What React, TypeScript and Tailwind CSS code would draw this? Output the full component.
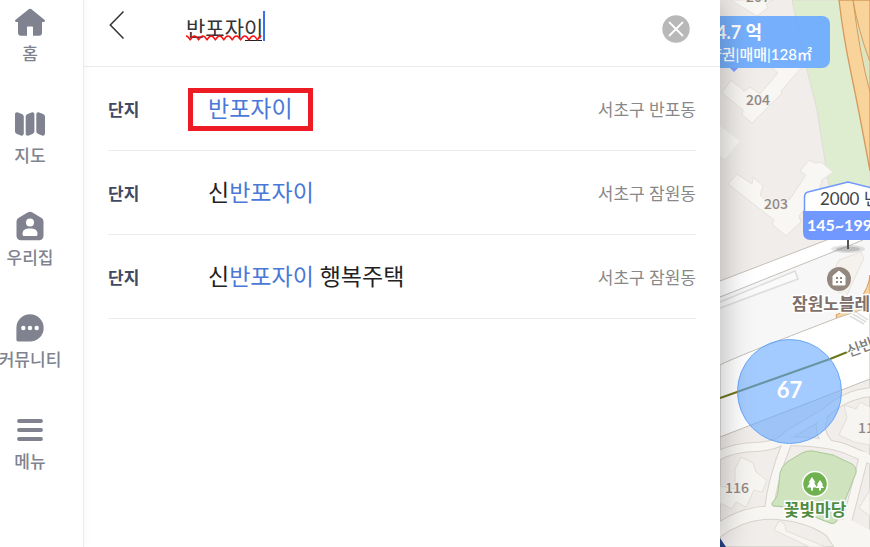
import React, { useState } from 'react';

const navItems = [
  { id: 'home', label: '홈' },
  { id: 'map', label: '지도' },
  { id: 'myhome', label: '우리집' },
  { id: 'community', label: '커뮤니티' },
  { id: 'menu', label: '메뉴' },
];

const results = [
  { before: '', match: '반포자이', after: '', area: '서초구 반포동', selected: true },
  { before: '신', match: '반포자이', after: '', area: '서초구 잠원동', selected: false },
  { before: '신', match: '반포자이', after: ' 행복주택', area: '서초구 잠원동', selected: false },
];

function NavIcon({ id }: { id: string }) {
  switch (id) {
    case 'home':
      return (
        <svg className="w-8 h-8" viewBox="0 0 32 32" fill="currentColor" aria-hidden="true">
          <path d="M15 3.1a1.8 1.8 0 0 1 2.2 0l13.2 10.6c1.1.9.6 2.2-.7 2.2H28v11c0 1.6-1.2 2.8-2.8 2.8H19v-8.4c0-.6-.3-.9-.9-.9h-4.2c-.6 0-.9.3-.9.9v8.4H6.8c-1.6 0-2.8-1.2-2.8-2.8v-11H2.3c-1.3 0-1.8-1.3-.7-2.200z" />
        </svg>);

    case 'map':
      return (
        <svg className="w-8 h-8" viewBox="0 0 32 32" fill="currentColor" aria-hidden="true">
          <path d="M1 6.7C1 4.700 2.500 3.900 4 4.500l3.800 1.600C9.300 6.800 9.800 7.500 9.800 9v16.300c0 2-1.400 2.800-2.900 2.200l-4-1.600C1.500 25.200 1 24.500 1 23z" />
          <path d="M20.400 6.700c0-2-1.400-2.800-2.900-2.200l-3.800 1.600c-1.500.7-2 1.400-2 2.900v16.300c0 2 1.400 2.800 2.900 2.200l3.900-1.600c1.400-.7 1.900-1.400 1.900-2.900z" />
          <path d="M22.300 6.700c0-2 1.400-2.800 2.900-2.200L29 6.100c1.500.7 2 1.400 2 2.900v16.300c0 2-1.400 2.800-2.900 2.200l-3.900-1.600c-1.400-.7-1.900-1.400-1.900-2.900z" />
        </svg>);

    case 'myhome':
      return (
        <svg className="w-8 h-8" viewBox="0 0 32 32" fill="currentColor" aria-hidden="true">
          <path d="M14 2.3a4 4 0 0 1 4 0l9.200 5.500A4 4 0 0 1 29.500 11.500V26a4.200 4.200 0 0 1-4.200 4.200H6.700A4.200 4.200 0 0 1 2.500 26V11.500A4 4 0 0 1 4.800 7.800z" />
          <circle cx="16" cy="12.500" r="4" fill="#fff" />
          <path d="M8.500 24c0-4 2.500-5.500 7.500-5.500s7.500 1.500 7.500 5.500c0 1.400-.5 2-1.800 2H10.300c-1.300 0-1.800-.6-1.800-2z" fill="#fff" />
        </svg>);

    case 'community':
      return (
        <svg className="w-8 h-8" viewBox="0 0 32 32" fill="currentColor" aria-hidden="true">
          <path d="M16 2.300a13.600 13.600 0 1 1 0 27.300H4.600c-1.400 0-2.200-.8-2.200-2.200V16A13.600 13.600 0 0 1 16 2.300z" />
          <circle cx="9.300" cy="16" r="2.200" fill="#fff" />
          <circle cx="16" cy="16" r="2.200" fill="#fff" />
          <circle cx="22.700" cy="16" r="2.200" fill="#fff" />
        </svg>);

    default:
      return (
        <svg className="w-8 h-8" viewBox="0 0 32 32" stroke="currentColor" strokeWidth="3.800" strokeLinecap="round" aria-hidden="true">
          <path d="M5 7h22M5 16h22M5 25h22" />
        </svg>);

  }
}

function Sidebar() {
  return (
    <nav className="relative z-20 w-21 shrink-0 bg-white border-r border-[#ececec] pt-1.5 pr-[23px] flex flex-col gap-[42px] shadow-[2px_0_6px_rgba(0,0,0,0.03)]">
      {navItems.map((item) =>
      <a
        key={item.id}
        href={`#${item.id}`}
        className="flex flex-col items-center gap-1 text-[#80838f]">

          <NavIcon id={item.id} />
          <span className="flex w-full justify-center text-[17px] leading-6 font-medium whitespace-nowrap">
            {item.label}
          </span>
        </a>
      )}
    </nav>);

}

function SearchHeader() {
  const [query, setQuery] = useState('반포자이');
  return (
    <header className="h-[67px] pb-2 pl-6 pr-[30px] flex items-center border-b border-[#ebebeb]">
      <button type="button" aria-label="뒤로" className="w-[78px] shrink-0 pb-2">
        <svg className="w-5 h-8" viewBox="0 0 20 32" fill="none" stroke="#333" strokeWidth="1.500" aria-hidden="true">
          <path d="M15.500 2.500 2.300 16 15.500 29.500" />
        </svg>
      </button>
      <div className="relative flex-1 min-w-0 pb-1">
        <input
          type="text"
          aria-label="검색"
          value={query}
          spellCheck={false}
          onChange={(e) => setQuery(e.target.value)}
          className="block w-full h-8 text-[21px] text-[#333] bg-transparent outline-none" />

        {query === '반포자이' &&
        <svg className="absolute left-0 top-0 w-20 h-8 pointer-events-none" viewBox="0 0 80 32" fill="none" aria-hidden="true">
            <path d="M59 29.500h17" stroke="#222" />
            <path
            d="M0 25q2.100 0 4.200 4 4.200-8 8.400 0 4.200-8 8.400 0 4.200-8 8.400 0 4.200-8 8.400 0 4.200-8 8.400 0 4.200-8 8.400 0 4.200-8 8.400 0 4.200-8 8.400 0 2-4 4-4"
            stroke="#fa1010"
            strokeWidth="1.400"
            strokeLinejoin="round" />

            <path d="M78 0v30" stroke="#3b6fe8" strokeWidth="2" />
          </svg>
        }
      </div>
      <button type="button" aria-label="지우기" onClick={() => setQuery('')} className="shrink-0">
        <svg className="w-7 h-7" viewBox="0 0 28 28" aria-hidden="true">
          <circle cx="14" cy="14" r="13.700" fill="#b8b8b8" />
          <path d="m7.500 7.500 13 13m0-13-13 13" stroke="#fff" strokeWidth="1.800" strokeLinecap="round" />
        </svg>
      </button>
    </header>);

}

function SearchPanel() {
  return (
    <main className="relative z-10 w-full max-w-[636px] bg-white shadow-[0_0_32px_rgba(0,0,0,0.3)]">
      <SearchHeader />
      <ul className="px-6">
        {results.map((r) =>
        <li key={r.before + r.match + r.after} className="border-b border-[#ebebeb]">
            <button type="button" className="w-full h-[83px] flex items-center text-left">
              <span className="w-25 shrink-0 pt-0.5 text-[17px] font-bold text-[#414963]">단지</span>
              <span className="relative pb-0.5 text-[23px] leading-8 text-[#222] whitespace-pre">
                {r.before}
                <span className="text-[#4a78d8]">{r.match}</span>
                {r.after}
                {r.selected &&
              <span className="absolute -inset-x-5 -top-1 h-[43px] border-[5px] border-[#ed1c24]" />
              }
              </span>
              <span className="ml-auto pt-0.5 text-[17px] text-[#888] whitespace-nowrap">{r.area}</span>
            </button>
          </li>
        )}
      </ul>
    </main>);

}

function MapBase() {
  return (
    <svg
      className="absolute left-0 top-0 w-[150px] h-[547px] font-['Noto_Sans_CJK_KR',sans-serif]"
      viewBox="0 0 150 547"
      fill="none"
      aria-hidden="true">

      <path d="M0 0H150V547H0z" fill="#f0edeb" />
      {/* river side green and the expressway */}
      <path d="M72 0 85 62 97 110 108 180 118 225 150 215V0z" fill="#deedd0" stroke="#e2dcd6" />
      <path d="M119 0Q123 35 131 73T150 171V0z" fill="#f8d49a" stroke="#d69a5d" strokeWidth="1.300" />
      <path d="M133 0Q138 30 150 62V92Q140 56 133 0z" fill="#dce5c0" stroke="#d69a5d" />
      {/* apartment blocks */}
      <g fill="#f8f7f4" stroke="#e6e2dd">
        <path d="M10 0 37 16 48 8 46 4 53 0z" />
        <path d="m2 93 9-13 13 11 6-4 10 7 18-21-7-6H82L61 91l1 2-25 25-5 5-10-8 1-5z" />
        <path d="m8 184 9-10 15 10 1-7 10 9-3 9 12 12 18-8 16-24-6-4 9-11 6 3 6-1 12 10-11 8-2 8-21 28 2 6-15 14-14-12 2-4z" />
        <path d="m0 126 20 15-15 18-5-3z" stroke="none" />
      </g>
      {/* side street, plots and the main road */}
      <path d="M0 281 125 233 150 222V547H0z" fill="#f7f7f8" />
      <path d="M0 281 125 233 150 222V236L143 240 0 297z" fill="#fff" />
      <path d="M0 281 125 233 150 222M0 297 143 240 141 235" stroke="#c4beb6" />
      <path d="m0 302 75-31 3 8-78 29" fill="#fafafa" stroke="#ddd" strokeWidth="1.500" />
      <path d="M116 266 119 260 141 252 144 258 125 299 115 288z" fill="#f5f2ed" stroke="#e6e2dd" />
      <path d="M150 275Q147 302 116 315L117 320 150 312z" fill="#f8d49a" stroke="#d69a5d" />
      <path d="M0 365Q15 357 117 318L150 307V547H0z" fill="#fff" stroke="#c4beb6" />
      <path d="m130 316 14 8m-11-10 13 8m-10-10 12 8" stroke="#ddd" strokeWidth="1.500" />
      <path d="M0 437 70 410 150 379V547H0z" fill="#f0edeb" stroke="#c4beb6" />
      {/* alleys */}
      <g stroke="#d9d3cc" strokeWidth="10">
        <path d="M-4 457Q10 448 35 447T68 435L105 413Q125 394 152 392" />
        <path d="M62 441Q105 441 126 449L154 461M104 416Q96 430 108 443M49 510Q52 480 67 443M145 452 127 522" />
        <path d="M-4 532Q25 510 58 513T111 531L125 552" strokeWidth="14" />
      </g>
      <path d="M108 526 127 518 150 530V547H120z" fill="#f8f6f3" />
      <g stroke="#f8f6f3" strokeWidth="8">
        <path d="M-4 457Q10 448 35 447T68 435L105 413Q125 394 152 392" />
        <path d="M62 441Q105 441 126 449L154 461M104 416Q96 430 108 443M49 510Q52 480 67 443M145 452 127 522" />
        <path d="M-4 532Q25 510 58 513T111 531L125 552" strokeWidth="12" />
      </g>
      <g fill="#f7f5f1" stroke="#e3dfd9">
        <path d="m15 469 6-12 12 6 3 9 11 8-5 12-8-2-8 17-10-5-4 7-12-6V486l15 3z" />
        <path d="m124 405 12 4 4-7 10 5v38l-16-3-15-7 8-17z" />
        <path d="m59 521 6 3 1 7 40 16H90l-36-17z" />
        <path d="m150 490-11 18 11 8z" />
      </g>
      <path
        d="M52 503Q58 497 58 492L60 473Q61 467 67 462L82 453Q88 450 93 451L113 455 132 464Q137 467 136 473L117 520Q115 525 110 523L97 518 80 508 54 506Q51 506 52 503z"
        fill="#d0e3bf"
        stroke="#abc996" />

      <path d="M0 398 110 359 150 343" stroke="#6d7518" strokeWidth="2" />
      <path d="m0 538 6 9H0z" fill="#263f80" />
      <g fill="#928783" stroke="#f5f3f0" strokeWidth="2" paintOrder="stroke" fontSize="14" fontWeight="500" textAnchor="middle">
        <text x="38" y="2">207</text>
        <text x="38" y="105">204</text>
        <text x="56" y="209">203</text>
        <text x="17" y="493">116</text>
        <text x="150" y="433">112</text>
      </g>
      <text transform="translate(129 357) rotate(-20)" fill="#807c78" stroke="#fff" strokeWidth="2" paintOrder="stroke" fontSize="15" fontWeight="500">신반포</text>
      {/* places */}
      <circle cx="119" cy="279" r="12" fill="#94877f" />
      <path d="m119 271 6 5v9h-12v-9z" fill="#fff" stroke="#fff" strokeLinejoin="round" />
      <path d="M116 277h2v2h-2zm4 0h2v2h-2zm-4 4h2v2h-2zm4 0h2v2h-2z" fill="#94877f" />
      <text x="72" y="310" fill="#7f706a" stroke="#fff" strokeWidth="3" paintOrder="stroke" fontSize="17" fontWeight="700">잠원노블레스</text>
      <circle cx="95" cy="484" r="12.500" fill="#6fb04f" stroke="#fff" strokeWidth="1.500" />
      <path d="m92 477 3.500 5.500H94l3 5h-4v3h-2v-3h-4l3-5h-1.500zm8 3 3 4.500h-1l2 3.500h-3v2.500h-2V488h-3l2-3.500h-1z" fill="#fff" />
      <text x="95" y="516" textAnchor="middle" fill="#4f8d42" stroke="#fff" strokeWidth="3" paintOrder="stroke" fontSize="17" fontWeight="700">꽃빛마당</text>
    </svg>);

}

function MapArea() {
  return (
    <section aria-label="지도" className="relative flex-1 min-w-[150px] overflow-hidden bg-[#f0edeb]">
      <MapBase />
      <button
        type="button"
        className="absolute -left-3 top-4 w-[122px] h-[52px] pb-1 rounded-r-lg bg-[#68a8ff]/90 text-white text-left whitespace-nowrap">

        <span className="block pl-2 text-[18px] leading-6 pt-1 font-bold">4.7 억</span>
        <span className="block text-[15px] leading-5 font-medium">양권|매매|128㎡</span>
        <span className="absolute left-[22px] top-full border-x-4 border-t-4 border-x-transparent border-t-[#7f9cff]" />
      </button>
      <button type="button" className="absolute left-[83px] top-[181px] w-[90px] h-[72px] text-left whitespace-nowrap">
        <svg className="absolute inset-0 w-[90px] h-[72px]" viewBox="0 0 90 72" aria-hidden="true">
          <ellipse cx="45" cy="68" rx="17" ry="4" fill="#777" opacity=".2" />
          <ellipse cx="45" cy="68" rx="12" ry="2.500" fill="#777" opacity=".3" />
          <path d="M45 58v10" stroke="#555" strokeWidth="2" />
          <path d="M1.500 32V16Q1.500 12 5 11L45 1 85 11Q88.500 12 88.500 16V32z" fill="#fff" stroke="#6f98fb" strokeWidth="1.500" />
          <path d="M0 30H90V51Q90 59 82 59H8Q0 59 0 51z" fill="#7098ff" />
        </svg>
        <span className="relative block pt-1 pl-[17px] text-[17px] leading-6 text-[#444]">2000 년</span>
        <span className="relative block pb-3 pl-1 text-[16px] leading-7 font-bold text-white">145~199</span>
      </button>
      <button
        type="button"
        className="absolute left-[17px] top-[339px] w-[105px] h-[105px] pb-1 rounded-full border border-[#67a7fa] bg-[#68a8ff]/60 text-white text-[22px] font-bold">

        67
      </button>
    </section>);

}

export default function App() {
  return (
    <div className="min-h-screen flex overflow-hidden bg-white font-['Lato','Noto_Sans_CJK_KR',sans-serif]">
      <Sidebar />
      <SearchPanel />
      <MapArea />
    </div>);

}
